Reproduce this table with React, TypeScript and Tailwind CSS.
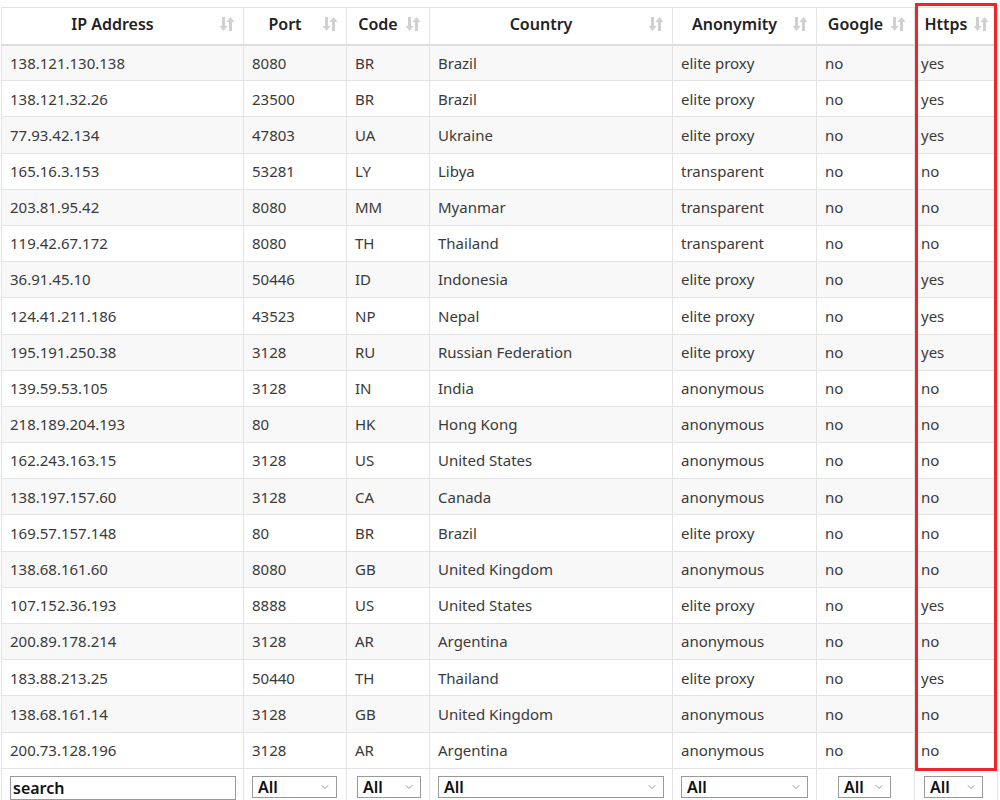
import { ChevronDown } from "lucide-react";

const rows = [
  ["138.121.130.138", "8080", "BR", "Brazil", "elite proxy", "no", "yes"],
  ["138.121.32.26", "23500", "BR", "Brazil", "elite proxy", "no", "yes"],
  ["77.93.42.134", "47803", "UA", "Ukraine", "elite proxy", "no", "yes"],
  ["165.16.3.153", "53281", "LY", "Libya", "transparent", "no", "no"],
  ["203.81.95.42", "8080", "MM", "Myanmar", "transparent", "no", "no"],
  ["119.42.67.172", "8080", "TH", "Thailand", "transparent", "no", "no"],
  ["36.91.45.10", "50446", "ID", "Indonesia", "elite proxy", "no", "yes"],
  ["124.41.211.186", "43523", "NP", "Nepal", "elite proxy", "no", "yes"],
  ["195.191.250.38", "3128", "RU", "Russian Federation", "elite proxy", "no", "yes"],
  ["139.59.53.105", "3128", "IN", "India", "anonymous", "no", "no"],
  ["218.189.204.193", "80", "HK", "Hong Kong", "anonymous", "no", "no"],
  ["162.243.163.15", "3128", "US", "United States", "anonymous", "no", "no"],
  ["138.197.157.60", "3128", "CA", "Canada", "anonymous", "no", "no"],
  ["169.57.157.148", "80", "BR", "Brazil", "elite proxy", "no", "no"],
  ["138.68.161.60", "8080", "GB", "United Kingdom", "anonymous", "no", "no"],
  ["107.152.36.193", "8888", "US", "United States", "elite proxy", "no", "yes"],
  ["200.89.178.214", "3128", "AR", "Argentina", "anonymous", "no", "no"],
  ["183.88.213.25", "50440", "TH", "Thailand", "elite proxy", "no", "yes"],
  ["138.68.161.14", "3128", "GB", "United Kingdom", "anonymous", "no", "no"],
  ["200.73.128.196", "3128", "AR", "Argentina", "anonymous", "no", "no"],
];

const columns = [
  { label: "IP Address", width: "w-[242px]" },
  { label: "Port", width: "w-[103px]" },
  { label: "Code", width: "w-[83px]" },
  { label: "Country", width: "w-[243px]" },
  { label: "Anonymity", width: "w-[144px]" },
  { label: "Google", width: "w-[98px]" },
  { label: "Https", width: "w-[83px]" },
];

// footer filter widths, per column
const filters = [
  { type: "input", cls: "w-[226px] ml-[8px]" },
  { type: "select", cls: "w-[85px] ml-[8px]" },
  { type: "select", cls: "w-[64px] ml-[10px]" },
  { type: "select", cls: "w-[226px] ml-[8px]" },
  { type: "select", cls: "w-[127px] ml-[8px]" },
  { type: "select", cls: "w-[53px] ml-[21px]" },
  { type: "select", cls: "w-[59px] ml-[9px]" },
];

function SortIcon() {
  return (
    <svg width="16" height="18" viewBox="0 0 16 18" className="shrink-0">
      <g fill="#d0d0d0">
        <rect x="3" y="2" width="3" height="11" />
        <polygon points="0.5,11 8.5,11 4.5,16" />
        <rect x="10" y="5" width="3" height="11" />
        <polygon points="7.5,7 15.5,7 11.5,2" />
      </g>
    </svg>
  );
}

export default function App() {
  return (
    <div
      className="relative w-[1000px] h-[800px] overflow-hidden bg-white text-[#333]"
      style={{ fontFamily: '"Noto Sans", "DejaVu Sans", sans-serif' }}
    >
      <div className="pt-[7px] pl-[1px]">
        <table className="border-collapse table-fixed text-[15px]">
          <thead>
            <tr className="h-[37px]">
              {columns.map((col) => (
                <th
                  key={col.label}
                  className={`${col.width} border border-[#e4e4e4] border-b-2 border-b-[#ddd] bg-white px-[8px] pb-[3px] text-[16px] font-semibold text-[#222]`}
                >
                  <div className="flex items-center justify-center gap-1">
                    <span className="flex-1 text-center">{col.label}</span>
                    <SortIcon />
                  </div>
                </th>
              ))}
            </tr>
          </thead>
          <tbody>
            {rows.map((row, i) => (
              <tr key={i} className={`h-[36.2px] ${i % 2 === 0 ? "bg-[#f8f8f8]" : "bg-white"}`}>
                {row.map((cell, j) => (
                  <td
                    key={j}
                    className={`border border-[#e4e4e4] ${j === 6 ? "px-[6px]" : "px-[8px]"} text-[#3a3a3a] whitespace-nowrap`}
                  >
                    {cell}
                  </td>
                ))}
              </tr>
            ))}
            <tr className="h-[36px]">
              {filters.map((f, j) => (
                <td key={j} className="border-x border-[#e4e4e4] p-0 align-top pt-[7px]">
                  {f.type === "input" ? (
                    <div className={`${f.cls} h-[24px] border border-[#999] bg-white px-[2px] text-[16px] font-semibold text-[#111] leading-[22px]`}>
                      search
                    </div>
                  ) : (
                    <div className={`${f.cls} h-[22px] border border-[#999] bg-white flex items-center justify-between pl-[5px] pr-[5px]`}>
                      <span className="text-[16px] font-semibold text-[#111]">All</span>
                      <ChevronDown size={12} color="#777" strokeWidth={1.5} />
                    </div>
                  )}
                </td>
              ))}
            </tr>
          </tbody>
        </table>
      </div>
      <div className="absolute left-[915px] top-[3px] w-[82px] h-[768px] border-[3px] border-[#f2242a]" />
    </div>
  );
}
